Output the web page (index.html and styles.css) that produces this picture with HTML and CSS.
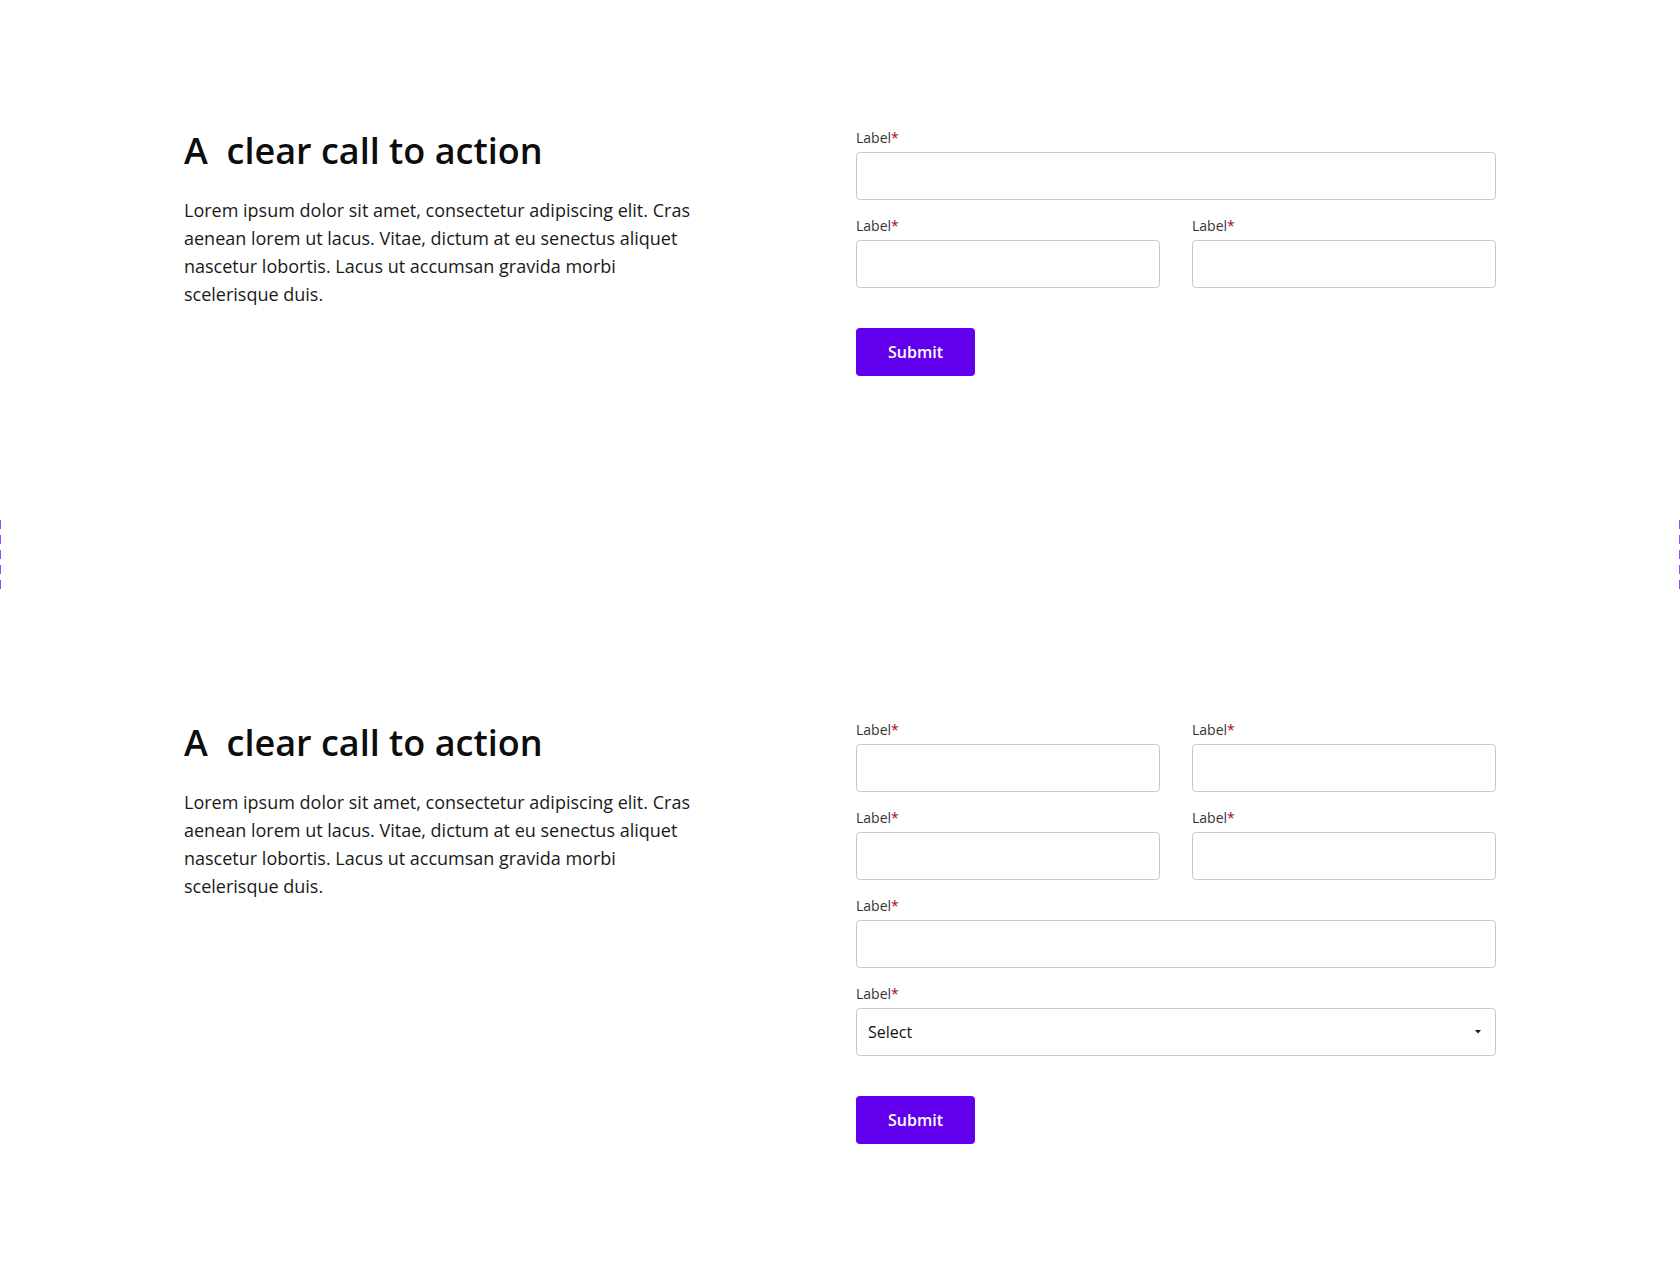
FILE: index.html
```html
<!DOCTYPE html>
<html lang="en">
<head>
<meta charset="utf-8">
<title>A clear call to action</title>
<link rel="stylesheet" href="styles.css">
</head>
<body>
<section class="cta">
  <div class="intro">
    <h2 class="title">A&nbsp; clear call to action</h2>
    <p class="text">Lorem ipsum dolor sit amet, consectetur adipiscing elit. Cras aenean lorem ut lacus. Vitae, dictum at eu senectus aliquet nascetur lobortis. Lacus ut accumsan gravida morbi scelerisque duis.</p>
  </div>
  <form class="form">
    <div class="field full">
      <label class="label">Label<span class="req">*</span></label>
      <div class="input"></div>
    </div>
    <div class="field">
      <label class="label">Label<span class="req">*</span></label>
      <div class="input"></div>
    </div>
    <div class="field">
      <label class="label">Label<span class="req">*</span></label>
      <div class="input"></div>
    </div>
    <div class="actions full">
      <button type="button" class="btn">Submit</button>
    </div>
  </form>
</section>
<div class="spacer"></div>
<section class="cta">
  <div class="intro">
    <h2 class="title">A&nbsp; clear call to action</h2>
    <p class="text">Lorem ipsum dolor sit amet, consectetur adipiscing elit. Cras aenean lorem ut lacus. Vitae, dictum at eu senectus aliquet nascetur lobortis. Lacus ut accumsan gravida morbi scelerisque duis.</p>
  </div>
  <form class="form">
    <div class="field">
      <label class="label">Label<span class="req">*</span></label>
      <div class="input"></div>
    </div>
    <div class="field">
      <label class="label">Label<span class="req">*</span></label>
      <div class="input"></div>
    </div>
    <div class="field">
      <label class="label">Label<span class="req">*</span></label>
      <div class="input"></div>
    </div>
    <div class="field">
      <label class="label">Label<span class="req">*</span></label>
      <div class="input"></div>
    </div>
    <div class="field full">
      <label class="label">Label<span class="req">*</span></label>
      <div class="input"></div>
    </div>
    <div class="field full">
      <label class="label">Label<span class="req">*</span></label>
      <div class="input select">
        <span class="select-text">Select</span>
        <svg class="caret" width="8" height="4" viewBox="0 0 8 4"><path d="M1 0 H7 L4 3.5 Z" fill="#1a1a1a"/></svg>
      </div>
    </div>
    <div class="actions full">
      <button type="button" class="btn">Submit</button>
    </div>
  </form>
</section>
</body>
</html>
```

FILE: styles.css
```css
* { box-sizing: border-box; }
html, body { margin: 0; padding: 0; background: #ffffff; }
body {
  font-family: "Open Sans", "Noto Sans", sans-serif;
  color: #111111;
  width: 1680px;
}
.cta {
  display: grid;
  grid-template-columns: 640px 640px;
  column-gap: 32px;
  padding: 128px 184px 144px;
  align-items: start;
}
.intro { display: flex; flex-direction: column; }
.title {
  margin: 0;
  font-size: 36px;
  line-height: 46px;
  font-weight: 600;
  color: #0d0d0d;
  letter-spacing: 0;
}
.text {
  margin: 22px 0 0;
  max-width: 520px;
  font-size: 18px;
  line-height: 28px;
  font-weight: 400;
  color: #1a1a1a;
}
.form {
  display: grid;
  grid-template-columns: 304px 304px;
  column-gap: 32px;
  row-gap: 16px;
  margin: 0;
}
.full { grid-column: 1 / -1; }
.field { display: flex; flex-direction: column; }
.label {
  font-size: 14px;
  line-height: 20px;
  color: #333333;
  margin-bottom: 4px;
}
.req { color: #b00020; }
.input {
  height: 48px;
  border: 1px solid #c8c8c8;
  border-radius: 4px;
  background: #ffffff;
}
.select {
  display: flex;
  align-items: center;
  justify-content: space-between;
  padding: 0 13px 0 11px;
}
.select-text {
  font-size: 16px;
  color: #111111;
}
.caret { display: block; }
.actions { padding-top: 24px; }
.btn {
  height: 48px;
  padding: 0 32px;
  border: none;
  border-radius: 4px;
  background: #6200ee;
  color: #ffffff;
  font-family: "Open Sans", "Noto Sans", sans-serif;
  font-size: 16px;
  font-weight: 600;
  cursor: pointer;
}
.spacer {
  height: 72px;
  background-image:
    repeating-linear-gradient(to bottom, #9747ff 0 9px, transparent 9px 15px),
    repeating-linear-gradient(to bottom, #9747ff 0 9px, transparent 9px 15px);
  background-size: 1px 100%, 1px 100%;
  background-position: left top, right top;
  background-repeat: no-repeat;
}
```
